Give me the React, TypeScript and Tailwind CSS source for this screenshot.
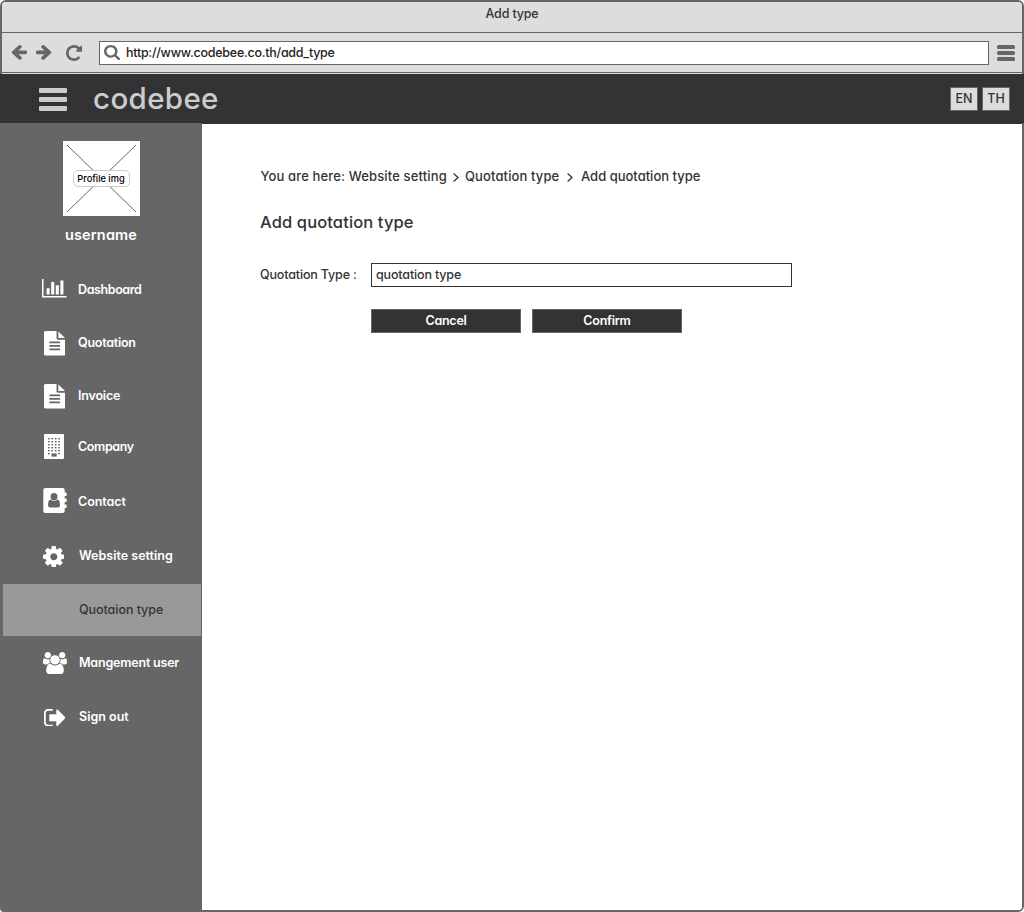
import type { ReactNode } from "react";

type IconProps = { box: string; className: string; children: ReactNode };

const Icon = ({ box, className, children }: IconProps) => (
  <svg viewBox={box} preserveAspectRatio="none" fill="currentColor" className={`block shrink-0 ${className}`}>
    {children}
  </svg>
);

const ARROW =
  "M1664 896v128q0 53-32.5 90.5t-84.5 37.5h-704l293 294q38 36 38 90t-38 90l-75 76q-37 37-90 37-52 0-91-37l-651-652q-37-37-37-90 0-52 37-91l651-650q38-38 91-38 52 0 90 38l75 74q38 38 38 91t-38 91l-293 293h704q52 0 84.5 37.5t32.5 90.5z";
const RELOAD =
  "M1664 256v448q0 26-19 45t-45 19h-448q-42 0-59-40-17-39 14-69l138-138q-148-137-349-137-104 0-198.5 40.5t-163.5 109.5-109.5 163.5-40.5 198.5 40.5 198.5 109.5 163.5 163.5 109.5 198.5 40.5q119 0 225-52t179-147q7-10 23-12 15 0 25 9l137 138q9 8 9.5 20.5t-7.5 22.5q-109 132-264 204.5t-327 72.5q-156 0-298-61t-245-164-164-245-61-298 61-298 164-245 245-164 298-61q147 0 284.5 55.5t244.5 156.5l130-129q29-31 70-14 39 17 39 59z";
const SEARCH =
  "M1216 832q0-185-131.5-316.5t-316.5-131.5-316.5 131.5-131.5 316.5 131.5 316.5 316.5 131.5 316.5-131.5 131.5-316.5zm512 832q0 52-38 90t-90 38q-54 0-90-38l-343-342q-179 124-399 124-143 0-273.5-55.5t-225-150-150-225-55.5-273.5 55.5-273.5 150-225 225-150 273.5-55.5 273.5 55.5 225 150 150 225 55.5 273.5q0 220-124 399l343 343q37 37 37 90z";
const CHART =
  "M640 896v512h-256v-512h256zm384-512v1024h-256v-1024h256zm1024 1152v128h-2048v-1536h128v1408h1920zm-640-896v768h-256v-768h256zm384-384v1152h-256v-1152h256z";
const FILE =
  "M1596 476q14 14 28 36h-472v-472q22 14 36 28zm-476 164h544v1056q0 40-28 68t-68 28h-1344q-40 0-68-28t-28-68v-1600q0-40 28-68t68-28h800v544q0 40 28 68t68 28zm160 736v-64q0-14-9-23t-23-9h-704q-14 0-23 9t-9 23v64q0 14 9 23t23 9h704q14 0 23-9t9-23zm0-256v-64q0-14-9-23t-23-9h-704q-14 0-23 9t-9 23v64q0 14 9 23t23 9h704q14 0 23-9t9-23zm0-256v-64q0-14-9-23t-23-9h-704q-14 0-23 9t-9 23v64q0 14 9 23t23 9h704q14 0 23-9t9-23z";
const COG =
  "M1152 896q0-106-75-181t-181-75-181 75-75 181 75 181 181 75 181-75 75-181zm512-109v222q0 12-8 23t-20 13l-185 28q-19 54-39 91 35 50 107 138 10 12 10 25t-9 23q-27 37-99 108t-94 71q-12 0-26-9l-138-108q-44 23-91 38-16 136-29 186-7 28-36 28h-222q-14 0-24.5-8.5t-11.5-21.5l-28-184q-49-16-90-37l-141 107q-10 9-25 9-14 0-25-11-126-114-165-168-7-10-7-23 0-12 8-23 15-21 51-66.5t54-70.5q-27-50-41-99l-183-27q-13-2-21-12.5t-8-23.5v-222q0-12 8-23t19-13l186-28q14-46 39-92-40-57-107-138-10-12-10-24 0-10 9-23 26-36 98.5-107.5t94.5-71.5q13 0 26 10l138 107q44-23 91-38 16-136 29-186 7-28 36-28h222q14 0 24.5 8.5t11.5 21.5l28 184q49 16 90 37l142-107q9-9 24-9 13 0 25 10 129 119 165 170 7 8 7 22 0 12-8 23-15 21-51 66.5t-54 70.5q26 50 41 98l183 28q13 2 21 12.5t8 23.5z";
const USERS =
  "M657 896q-162 5-265 128h-134q-82 0-138-40.5t-56-118.5q0-353 124-353 6 0 43.5 21t97.5 42.5 119 21.5q67 0 133-23-5 37-5 66 0 139 81 256zm1071 637q0 120-73 189.5t-194 69.5h-874q-121 0-194-69.5t-73-189.5q0-53 3.5-103.5t14-109 26.5-108.5 43-97.5 62-81 85.5-53.5 111.5-20q10 0 43 21.5t73 48 107 48 135 21.5 135-21.5 107-48 73-48 43-21.5q61 0 111.5 20t85.5 53.5 62 81 43 97.5 26.5 108.5 14 109 3.5 103.5zm-1024-1277q0 106-75 181t-181 75-181-75-75-181 75-181 181-75 181 75 75 181zm704 384q0 159-112.5 271.5t-271.5 112.5-271.5-112.5-112.5-271.5 112.5-271.5 271.5-112.5 271.5 112.5 112.5 271.5zm576 225q0 78-56 118.5t-138 40.5h-134q-103-123-265-128 81-117 81-256 0-29-5-66 66 23 133 23 59 0 119-21.5t97.5-42.5 43.5-21q124 0 124 353zm-128-609q0 106-75 181t-181 75-181-75-75-181 75-181 181-75 181 75 75 181z";
const SIGN_OUT =
  "M704 1440q0 4 1 20t.5 26.5-3 23.5-10 19.5-20.5 6.5h-320q-119 0-203.5-84.5t-84.5-203.5v-704q0-119 84.5-203.5t203.5-84.5h320q13 0 22.5 9.5t9.5 22.5q0 4 1 20t.5 26.5-3 23.5-10 19.5-20.5 6.5h-320q-66 0-113 47t-47 113v704q0 66 47 113t113 47h312l11.5 1 11.5 3 8 5.5 7 9 2 13.5zm928-544q0 26-19 45l-544 544q-19 19-45 19t-45-19-19-45v-288h-448q-26 0-45-19t-19-45v-384q0-26 19-45t45-19h448v-288q0-26 19-45t45-19 45 19l544 544q19 19 19 45z";

const BuildingIcon = () => (
  <Icon box="0 0 20 25" className="mt-px h-[25px] w-[20px]">
    <rect width="20" height="25" rx="1" />
    <g fill="#666">
      {[4, 7, 10, 13, 16, 19].map((y) =>
        [4, 7.4, 10.8, 14.2].map((x) =>
          y === 19 && x > 5 && x < 13 ? null : <rect key={`${x}-${y}`} x={x} y={y} width="1.7" height="1.4" />
        )
      )}
      <rect x="7.5" y="19.4" width="5.2" height="3.2" />
    </g>
  </Icon>
);

const ContactIcon = () => (
  <Icon box="0 0 24 25" className="h-[25px] w-[24px]">
    <rect x="0.3" width="21.4" height="25" rx="2" />
    <rect x="21" y="4.6" width="2.6" height="3.4" rx=".6" />
    <rect x="21" y="10.6" width="2.6" height="3.4" rx=".6" />
    <rect x="21" y="16.6" width="2.6" height="3.4" rx=".6" />
    <g fill="#666">
      <ellipse cx="11" cy="8.8" rx="3.5" ry="3.7" />
      <path d="M7.5 11.4Q5 12 5 17.2q0 2.300 2.200 2.300h7.600Q17 19.500 17 17.200q0-5.200-2.500-5.800Q11 14.800 7.500 11.400z" />
    </g>
  </Icon>
);

type NavItem = { label: string; height: string; icon?: ReactNode; text: string; active?: boolean };

const NAV: NavItem[] = [
  {
    label: "Dashboard",
    height: "h-[53px]",
    text: "pl-[36px] pt-px tracking-[-0.4px]",
    icon: <Icon box="0 128 2048 1536" className="-mt-[2px] h-[18.5px] w-[24.5px]"><path d={CHART} /></Icon>,
  },
  {
    label: "Quotation",
    height: "h-[53px]",
    text: "pl-[36px] pt-[2px] tracking-[-0.25px]",
    icon: <Icon box="128 0 1536 1792" className="ml-[1.5px] mt-[2px] h-[24.5px] w-[21.5px]"><path d={FILE} /></Icon>,
  },
  {
    label: "Invoice",
    height: "h-[52px]",
    text: "pl-[36px] pt-[3px] tracking-[-0.2px]",
    icon: <Icon box="128 0 1536 1792" className="ml-[1.5px] mt-[3px] h-[24.5px] w-[21.5px]"><path d={FILE} /></Icon>,
  },
  {
    label: "Company",
    height: "h-[52px]",
    text: "pl-[36px] tracking-[-0.4px]",
    icon: <span className="ml-[2px] -mt-[2px]"><BuildingIcon /></span>,
  },
  {
    label: "Contact",
    height: "h-[56px]",
    text: "pl-[36px] pt-[2px] tracking-[-0.05px]",
    icon: <span className="ml-[1px] -mt-px"><ContactIcon /></span>,
  },
  {
    label: "Website setting",
    height: "h-[55px]",
    text: "pl-[37px] -mt-px",
    icon: <Icon box="128 128 1536 1536" className="ml-[0.5px] h-[21.5px] w-[21.5px]"><path d={COG} /></Icon>,
  },
  { label: "Quotaion type", height: "h-[52px]", text: "pl-[37px] tracking-[-0.05px]", active: true },
  {
    label: "Mangement user",
    height: "h-[53px]",
    text: "pl-[37px] pt-px tracking-[-0.2px]",
    icon: <Icon box="64 0 1920 1792" className="ml-[1px] mt-px h-[22px] w-[24px]"><path d={USERS} /></Icon>,
  },
  {
    label: "Sign out",
    height: "h-[54px]",
    text: "pl-[37px] pt-[3px]",
    icon: <Icon box="64 256 1568 1280" className="ml-[1.5px] mt-[3px] h-[17.5px] w-[21.5px]"><path d={SIGN_OUT} /></Icon>,
  },
];

const BrowserChrome = () => (
  <div className="h-[72px] shrink-0 rounded-t bg-[#ddd]">
    <div className="flex h-[31px] items-start justify-center border-b border-[#666] pt-[2px] text-[12.5px] leading-[20px] font-medium">
      <span className="tracking-[-0.15px]">Add type</span>
    </div>
    <div className="flex h-[40px] items-center border-b border-[#666] pl-[9px] text-[#666]">
      <Icon box="128 192 1536 1664" className="h-[16px] w-[16px]"><path d={ARROW} /></Icon>
      <Icon box="128 192 1536 1664" className="ml-[9px] h-[16px] w-[16px] -scale-x-100"><path d={ARROW} /></Icon>
      <Icon box="128 128 1536 1536" className="ml-[14px] h-[16px] w-[16px]"><path d={RELOAD} /></Icon>
      <div className="ml-[17px] flex h-[24px] w-[890px] items-center border border-[#666] bg-white pl-[4px]">
        <Icon box="64 128 1664 1664" className="-mt-px h-[15px] w-[16px]"><path d={SEARCH} /></Icon>
        <span className="ml-[6px] pt-[2px] text-[12.5px] font-medium tracking-[-0.26px] text-[#222]">
          http://www.codebee.co.th/add_type
        </span>
      </div>
      <Icon box="0 0 18 16" className="ml-[8px] h-[16px] w-[18px]">
        <rect width="18" height="4" rx="1.5" />
        <rect y="6" width="18" height="4" rx="1.5" />
        <rect y="12" width="18" height="4" rx="1.5" />
      </Icon>
    </div>
  </div>
);

const Header = () => (
  <header className="-mx-[2px] flex h-[49px] shrink-0 items-center bg-[#333] pl-[39px] pr-[14px] text-[#ccc]">
    <Icon box="0 0 28 23" className="mt-[2px] h-[23px] w-[28px]">
      <rect width="28" height="5" rx="1" />
      <rect y="9" width="28" height="5" rx="1" />
      <rect y="18" width="28" height="5" rx="1" />
    </Icon>
    <h1 className="ml-[26px] -mt-px text-[29.5px] leading-[40px] font-medium tracking-[0.35px]">codebee</h1>
    <div className="ml-auto mt-px flex gap-[4px] text-[12.5px] font-medium text-[#333]">
      <button className="h-[24px] w-[28px] border border-[#666] bg-[#ddd]">EN</button>
      <button className="h-[24px] w-[28px] border border-[#666] bg-[#ddd]">TH</button>
    </div>
  </header>
);

const Sidebar = () => (
  <aside className="-mb-[2px] -ml-[2px] flex w-[202px] shrink-0 flex-col rounded-bl bg-[#666] text-white">
    <div className="flex h-[140px] flex-col items-center pt-[18px]">
      <div className="grid h-[75px] w-[77px] place-items-center bg-white">
        <svg viewBox="0 0 77 75" className="col-start-1 row-start-1 h-[75px] w-[77px]" stroke="#666" strokeWidth="1">
          <path d="M4 4L73 71M73 4L4 71" />
        </svg>
        <span className="col-start-1 row-start-1 flex h-[17px] w-[57px] items-center justify-center rounded-[5px] border border-[#ccc] bg-white/85 pt-px text-[9.25px] font-medium text-black">
          Profile img
        </span>
      </div>
      <div className="mt-[9px] text-[14.5px] leading-[20px] font-semibold tracking-[0.15px]">username</div>
    </div>
    <nav className="flex flex-col text-[12.5px] font-semibold">
      {NAV.map((n) => (
        <div
          key={n.label}
          className={`flex items-center ${n.height} ${n.active ? "ml-[3px] mr-px bg-[#999] pl-[39px] font-medium text-[#333]" : "pl-[42px]"}`}
        >
          <div className="flex w-0 items-center">{n.icon}</div>
          <span className={`whitespace-nowrap ${n.text}`}>{n.label}</span>
        </div>
      ))}
    </nav>
  </aside>
);

const Chevron = ({ className }: { className: string }) => (
  <svg viewBox="0 0 6 9" className={`mt-[3px] h-[9px] w-[6px] ${className}`} fill="none" stroke="#333" strokeWidth="1.3">
    <path d="M.6.6L5 4.5.6 8.4" />
  </svg>
);

const Main = () => (
  <main className="flex flex-1 flex-col rounded-br border-t border-[#333] bg-white pl-[58px] font-medium text-[#333]">
    <div className="mt-[42px] flex h-[20px] items-center text-[13px] whitespace-nowrap">
      <span className="w-[193px] pt-px pl-[0.5px] tracking-[0.14px]">You are here: Website setting</span>
      <Chevron className="" />
      <span className="ml-[6px] w-[95px] pt-px tracking-[0.12px]">Quotation type</span>
      <Chevron className="ml-[7px]" />
      <span className="ml-[8px] pt-px">Add quotation type</span>
    </div>
    <h2 className="mt-[24px] text-[16.5px] leading-[24px] font-medium tracking-[0.12px]">Add quotation type</h2>
    <div className="mt-[29px] flex h-[24px] items-center text-[12.5px]">
      <label className="w-[111px] tracking-[-0.15px]">Quotation Type :</label>
      <input
        defaultValue="quotation type"
        className="h-[24px] w-[421px] border border-[#333] bg-white pb-px pl-[4px] tracking-[-0.15px] outline-none"
      />
    </div>
    <div className="mt-[22px] ml-[111px] flex gap-[11px] text-[12.5px] font-semibold tracking-[-0.25px] text-white">
      <button className="h-[24px] w-[150px] border border-[#666] bg-[#333]">Cancel</button>
      <button className="h-[24px] w-[150px] border border-[#666] bg-[#333]">Confirm</button>
    </div>
  </main>
);

export default function App() {
  return (
    <div className="flex h-[912px] w-[1024px] flex-col rounded-md border-2 border-[#666] bg-white font-['Inter',sans-serif] text-[#333] [font-feature-settings:'cv11']">
      <BrowserChrome />
      <Header />
      <div className="flex flex-1">
        <Sidebar />
        <Main />
      </div>
    </div>
  );
}
